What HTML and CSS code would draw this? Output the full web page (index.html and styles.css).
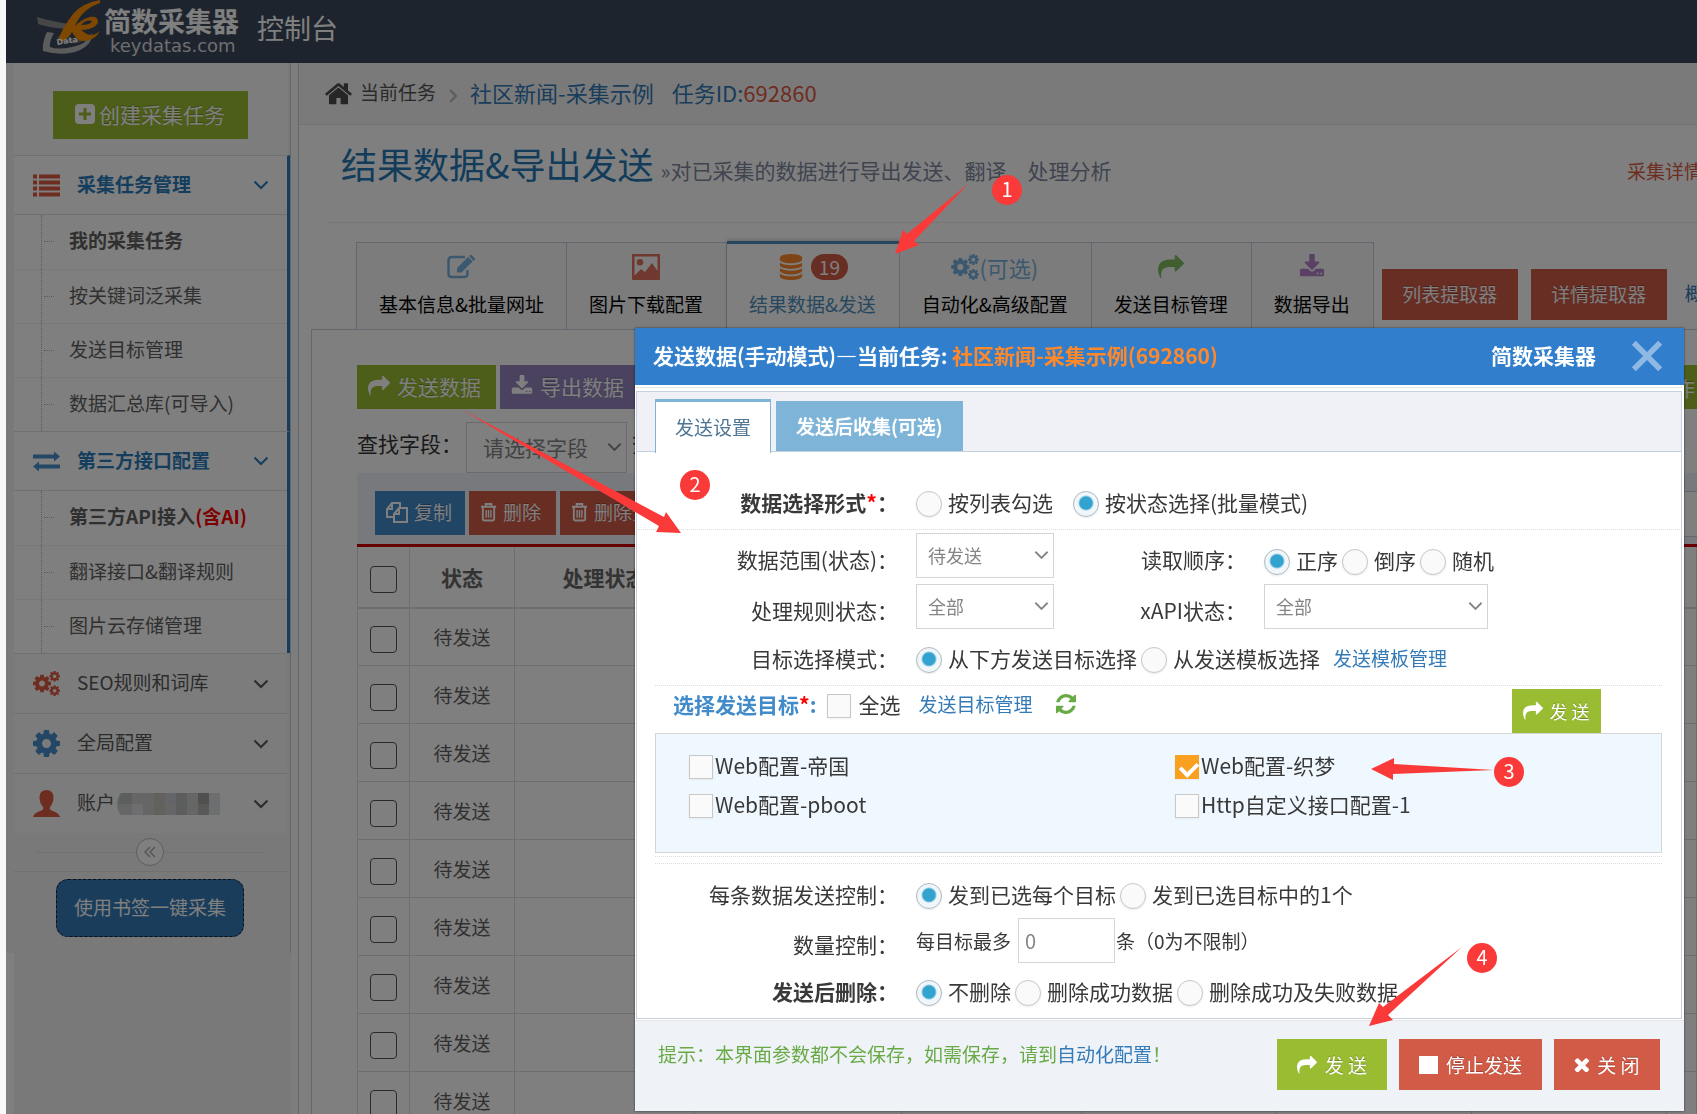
FILE: index.html
```html
<!DOCTYPE html>
<html lang="zh-CN">
<head>
<meta charset="utf-8">
<title>简数采集器 控制台</title>
<link rel="stylesheet" href="styles.css">
</head>
<body>
<svg class="sprite" aria-hidden="true">
  <symbol id="share" viewBox="0 0 1792 1792"><path d="M1792 640q0 26-19 45l-512 512q-19 19-45 19t-45-19-19-45v-256h-224q-98 0-175.500 6t-154 21.500-133 42.500-105.500 69.500-80 101-48.500 138.500-17.500 181q0 55 5 123 0 6 2.500 23.500t2.500 26.500q0 15-8.500 25t-23.500 10q-16 0-28-17-7-9-13-22t-13.500-30-10.500-24q-127-285-127-451 0-199 53-333 162-403 875-403h224v-256q0-26 19-45t45-19 45 19l512 512q19 19 19 45z"/></symbol>
  <symbol id="download" viewBox="0 0 1792 1792"><path d="M1344 1344q0-26-19-45t-45-19-45 19-19 45 19 45 45 19 45-19 19-45zm256 0q0-26-19-45t-45-19-45 19-19 45 19 45 45 19 45-19 19-45zm128-224v320q0 40-28 68t-68 28h-1472q-40 0-68-28t-28-68v-320q0-40 28-68t68-28h465l135 136q58 56 136 56t136-56l136-136h464q40 0 68 28t28 68zm-325-569q17 41-14 70l-448 448q-18 19-45 19t-45-19l-448-448q-31-29-14-70 17-39 59-39h256v-448q0-26 19-45t45-19h256q26 0 45 19t19 45v448h256q42 0 59 39z"/></symbol>
  <symbol id="cog" viewBox="128 128 1536 1536"><path d="M1152 896q0-106-75-181t-181-75-181 75-75 181 75 181 181 75 181-75 75-181zm512-109v222q0 12-8 23t-20 13l-185 28q-19 54-39 91 35 50 107 138 10 12 10 25t-9 23q-27 37-99 108t-94 71q-12 0-26-9l-138-108q-44 23-91 38-16 136-29 186-7 28-36 28h-222q-14 0-24.500-8.500t-11.500-21.500l-28-184q-49-16-90-37l-141 107q-10 9-25 9-14 0-25-11-126-114-165-168-7-10-7-23 0-12 8-23 15-21 51-66.500t54-70.500q-27-50-41-99l-183-27q-13-2-21-12.500t-8-23.500v-222q0-12 8-23t19-13l186-28q14-46 39-92-40-57-107-138-10-12-10-24 0-10 9-23 26-36 98.500-107.500t94.500-71.500q13 0 26 10l138 107q44-23 91-38 16-136 29-186 7-28 36-28h222q14 0 24.500 8.500t11.500 21.500l28 184q49 16 90 37l142-107q9-9 24-9 13 0 25 10 129 119 165 170 7 8 7 22 0 12-8 23-15 21-51 66.500t-54 70.500q26 50 41 98l183 28q13 2 21 12.500t8 23.500z"/></symbol>
  <symbol id="cogs" viewBox="0 0 30 28"><use href="#cog" x="0" y="4" width="20" height="20"/><use href="#cog" x="18" y="0" width="12" height="12"/><use href="#cog" x="18" y="16" width="12" height="12"/></symbol>
  <symbol id="home" viewBox="80 200 1632 1360"><path d="M1472 992v480q0 26-19 45t-45 19h-384v-384h-256v384h-384q-26 0-45-19t-19-45v-480q0-1 .5-3t.5-3l575-474 575 474q1 2 1 6zm223-69l-62 74q-8 9-21 11h-3q-13 0-21-7l-692-577-692 577q-12 8-24 7-13-2-21-11l-62-74q-8-10-7-23.500t11-21.500l719-599q32-26 76-26t76 26l244 204v-195q0-14 9-23t23-9h192q14 0 23 9t9 23v408l219 182q10 8 11 21.500t-7 23.500z"/></symbol>
  <symbol id="refresh" viewBox="128 128 1536 1536"><path d="M1639 1056q0 5-1 7-64 268-268 434.500t-478 166.500q-146 0-282.500-55t-243.500-157l-129 129q-19 19-45 19t-45-19-19-45v-448q0-26 19-45t45-19h448q26 0 45 19t19 45-19 45l-137 137q71 66 161 102t187 36q134 0 250-65t186-179q11-17 53-117 8-23 30-23h192q13 0 22.500 9.500t9.500 22.500zm25-800v448q0 26-19 45t-45 19h-448q-26 0-45-19t-19-45 19-45l138-138q-148-137-349-137-134 0-250 65t-186 179q-11 17-53 117-8 23-30 23h-199q-13 0-22.500-9.500t-9.500-22.500v-7q65-268 270-434.500t480-166.500q146 0 284 55.500t245 156.500l130-129q19-19 45-19t45 19 19 45z"/></symbol>
  <symbol id="database" viewBox="128 0 1536 1792"><path d="M896 768q237 0 443-43t325-127v170q0 69-103 128t-280 93.500-385 34.500-385-34.500-280-93.500-103-128v-170q119 84 325 127t443 43zm0 768q237 0 443-43t325-127v170q0 69-103 128t-280 93.500-385 34.500-385-34.500-280-93.500-103-128v-170q119 84 325 127t443 43zm0-384q237 0 443-43t325-127v170q0 69-103 128t-280 93.500-385 34.500-385-34.500-280-93.500-103-128v-170q119 84 325 127t443 43zm0-1152q208 0 385 34.500t280 93.500 103 128v128q0 69-103 128t-280 93.500-385 34.500-385-34.500-280-93.500-103-128v-128q0-69 103-128t280-93.500 385-34.500z"/></symbol>
  <symbol id="times" viewBox="238 366 1252 1252"><path transform="translate(0 96)" d="M1490 1322q0 40-28 68l-136 136q-28 28-68 28t-68-28l-294-294-294 294q-28 28-68 28t-68-28l-136-136q-28-28-28-68t28-68l294-294-294-294q-28-28-28-68t28-68l136-136q28-28 68-28t68 28l294 294 294-294q28-28 68-28t68 28l136 136q28 28 28 68t-28 68l-294 294 294 294q28 28 28 68z"/></symbol>
  <symbol id="chevron" viewBox="0 0 16 10"><path d="M1.500 1.500L8 8l6.500-6.500" fill="none" stroke="currentColor" stroke-width="2"/></symbol>
  <symbol id="trash" viewBox="0 0 18 20"><g fill="none" stroke="currentColor" stroke-width="2"><path d="M1 4.500h16M6 4V1.500h6V4M3 5v12.500Q3 19 4.500 19h9q1.500 0 1.500-1.500V5"/><path d="M6.500 8v8M9 8v8M11.500 8v8" stroke-width="1.500"/></g></symbol>
</svg>

<div class="page">
  <header class="navbar">
    <a class="brand" href="#">
      <svg class="brand-mark" viewBox="0 0 66 54" aria-hidden="true">
        <path d="M1 17Q14 21 33 24L31 29Q14 28 2 24z" fill="#8f8f8f"/>
        <path d="M11 32Q6 42 7 51Q28 57 44 50Q57 44 56 33Q50 45 36 47Q22 50 14 47Q13 42 18 33z" fill="#b8b8b8"/>
        <path d="M22 37Q36 46 50 38" fill="none" stroke="#777" stroke-width="3"/>
        <path fill-rule="evenodd" d="M64 0Q46 3 37 14Q27 27 23 38Q22 42 27 41Q32 39 36 32Q41 42 49 41Q59 40 64 31Q56 38 49 33L45 30Q60 29 62 22Q62 16 54 17Q46 19 39 26Q46 9 64 3zM45 25Q50 19 56 21Q55 25 45 25z" fill="#fe9000"/>
        <text x="21" y="45" class="mark-text" transform="rotate(-8 21 45)">Data</text>
      </svg>
      <span class="brand-name"><b>简数采集器</b><small>keydatas.com</small></span>
    </a>
    <span class="navbar-title">控制台</span>
  </header>

  <div class="main">
    <nav class="sidebar">
      <div class="side-top">
        <button class="btn green create"><svg class="plus" viewBox="0 0 20 20" aria-hidden="true"><path fill-rule="evenodd" d="M4 0h12q4 0 4 4v12q0 4-4 4H4q-4 0-4-4V4q0-4 4-4zm4.500 4v4.500H4v3h4.500V16h3v-4.500H16v-3h-4.500V4z"/></svg>创建采集任务</button>
      </div>
      <ul class="menu">
        <li class="open">
          <a class="group" href="#"><svg class="mi red" viewBox="0 0 27 22" aria-hidden="true"><path d="M0 0h4v4H0zM6 0h21v4H6zM0 6h4v4H0zM6 6h21v4H6zM0 12h4v4H0zM6 12h21v4H6zM0 18h4v4H0zM6 18h21v4H6z"/></svg><span>采集任务管理</span><svg class="chev"><use href="#chevron"/></svg></a>
          <ul class="sub">
            <li><a class="strong" href="#">我的采集任务</a></li>
            <li><a href="#">按关键词泛采集</a></li>
            <li><a href="#">发送目标管理</a></li>
            <li><a href="#">数据汇总库(可导入)</a></li>
          </ul>
        </li>
        <li class="open">
          <a class="group" href="#"><svg class="mi blue" viewBox="0 0 27 20" aria-hidden="true"><path d="M0 3h21V0l6 5-6 5V7H0zM27 13H6v-3l-6 5 6 5v-3h21z"/></svg><span>第三方接口配置</span><svg class="chev"><use href="#chevron"/></svg></a>
          <ul class="sub">
            <li><a class="strong" href="#">第三方API接入<em>(含AI)</em></a></li>
            <li><a href="#">翻译接口&amp;翻译规则</a></li>
            <li><a href="#">图片云存储管理</a></li>
          </ul>
        </li>
        <li><a class="group" href="#"><svg class="mi red"><use href="#cogs"/></svg><span>SEO规则和词库</span><svg class="chev"><use href="#chevron"/></svg></a></li>
        <li><a class="group" href="#"><svg class="mi blue"><use href="#cog"/></svg><span>全局配置</span><svg class="chev"><use href="#chevron"/></svg></a></li>
        <li><a class="group" href="#"><svg class="mi red" viewBox="0 0 27 27" aria-hidden="true"><path d="M13.500 0Q20 0 20.500 7Q20.500 13 17 17Q16 20 20 21Q26 23 27 27H0Q1 23 7 21Q11 20 10 17Q6.500 13 6.500 7Q7 0 13.500 0z"/></svg><span>账户</span>
          <svg class="mosaic" viewBox="0 0 103 22" aria-hidden="true"><path fill="#cdcdcd" d="M4 0h95q4 0 4 4v14q0 4-4 4H4q-4-4-4-11T4 0z"/><path fill="#b9bcbb" d="M4 0h11v11H1zM59 0h11v22H59z"/><path fill="#c5c2bd" d="M37 0h11v22H37z"/><path fill="#dadde0" d="M15 11h11v11H15zM92 0h11v22H92z"/><path fill="#c8cbd2" d="M48 0h11v11H48z"/><path fill="#a2a19c" d="M81 0h11v11H81z"/><path fill="#b3b2ae" d="M81 11h11v11H81z"/></svg>
          <svg class="chev"><use href="#chevron"/></svg></a></li>
      </ul>
      <div class="collapse"><button aria-label="收起菜单"><svg viewBox="0 0 12 12" aria-hidden="true"><path d="M6 1L1 6l5 5M11 1L6 6l5 5" fill="none" stroke="currentColor" stroke-width="1.500"/></svg></button></div>
      <div class="side-bottom"><button class="bookmark">使用书签一键采集</button></div>
    </nav>

    <main class="content">
      <div class="crumbs">
        <svg class="home"><use href="#home"/></svg>
        <a class="crumb" href="#">当前任务</a>
        <svg class="sep" viewBox="0 0 8 14" aria-hidden="true"><path d="M1 1l6 6-6 6" fill="none" stroke="currentColor" stroke-width="2"/></svg>
        <a class="task" href="#">社区新闻-采集示例</a>
        <span class="task">任务ID:<em>692860</em></span>
      </div>
      <div class="heading">
        <h1>结果数据&amp;导出发送</h1>
        <small>»对已采集的数据进行导出发送、翻译、处理分析</small>
        <a class="detail" href="#">采集详情</a>
      </div>
      <div class="tabs">
        <a class="tab" href="#"><span class="tab-icon c-blue"><svg viewBox="0 0 28 24" aria-hidden="true"><path d="M18 2H5Q1.500 2 1.500 5.500v13Q1.500 22 5 22h12q3.500 0 3.500-3.500V15" fill="none" stroke="currentColor" stroke-width="2.500"/><path d="M10 13L21 2l4.500 4.500-11 11H10zM22 1l1-1q1-.5 2 .5L27.500 3q1 1 0 2l-1 1z"/></svg></span><span>基本信息&amp;批量网址</span></a>
        <a class="tab" href="#"><span class="tab-icon c-red"><svg viewBox="0 0 28 26" aria-hidden="true"><path fill-rule="evenodd" d="M1 0h26q1 0 1 1v24q0 1-1 1H1q-1 0-1-1V1q0-1 1-1zm1.500 2.500v19L9 15l4 3 7-9 5.500 8V2.500zM8 5a3 3 0 1 1 0 6.500A3 3 0 1 1 8 5z"/></svg></span><span>图片下载配置</span></a>
        <a class="tab active" href="#"><span class="tab-icon c-orange"><svg><use href="#database"/></svg><b class="count">19</b></span><span>结果数据&amp;发送</span></a>
        <a class="tab" href="#"><span class="tab-icon c-blue"><svg><use href="#cogs"/></svg>(可选)</span><span>自动化&amp;高级配置</span></a>
        <a class="tab" href="#"><span class="tab-icon c-green"><svg><use href="#share"/></svg></span><span>发送目标管理</span></a>
        <a class="tab" href="#"><span class="tab-icon c-purple"><svg><use href="#download"/></svg></span><span>数据导出</span></a>
        <div class="tab-actions">
          <button class="btn red">列表提取器</button>
          <button class="btn red">详情提取器</button>
          <a class="overview" href="#">概</a>
        </div>
      </div>
      <section class="widget">
        <div class="actions">
          <button class="btn green"><svg class="bi"><use href="#share"/></svg>发送数据</button>
          <button class="btn purple"><svg class="bi"><use href="#download"/></svg>导出数据</button>
          <button class="btn green more">作</button>
        </div>
        <div class="search">
          <label for="field">查找字段：</label>
          <span class="select big"><select id="field"><option>请选择字段</option></select><svg><use href="#chevron"/></svg></span>
          <span>查</span>
        </div>
        <div class="toolbar">
          <button class="btn azure"><svg class="bi" viewBox="0 0 22 22" aria-hidden="true"><path d="M7 16H1V8l5-6h8v5M1 8h5V2M8 13l5-6h8v14H8zM8 13h5V7" fill="none" stroke="currentColor" stroke-width="2"/></svg>复制</button>
          <button class="btn red"><svg class="ti"><use href="#trash"/></svg>删除</button>
          <button class="btn red"><svg class="ti"><use href="#trash"/></svg>删除全部</button>
          <input class="tool-input" aria-label="筛选">
        </div>
        <table class="grid">
          <colgroup><col class="c1"><col class="c2"><col class="c3"><col class="c4"><col class="c3"><col class="c5"><col class="c5"><col class="c5"><col></colgroup>
          <thead><tr><th><input type="checkbox" aria-label="全部行"></th><th>状态</th><th>处理状态</th><th></th><th></th><th></th><th></th><th></th><th></th></tr></thead>
          <tbody>
            <tr><td><input type="checkbox" aria-label="第1行"></td><td>待发送</td><td></td><td></td><td></td><td></td><td></td><td></td><td></td></tr>
            <tr><td><input type="checkbox" aria-label="第2行"></td><td>待发送</td><td></td><td></td><td></td><td></td><td></td><td></td><td></td></tr>
            <tr><td><input type="checkbox" aria-label="第3行"></td><td>待发送</td><td></td><td></td><td></td><td></td><td></td><td></td><td></td></tr>
            <tr><td><input type="checkbox" aria-label="第4行"></td><td>待发送</td><td></td><td></td><td></td><td></td><td></td><td></td><td></td></tr>
            <tr><td><input type="checkbox" aria-label="第5行"></td><td>待发送</td><td></td><td></td><td></td><td></td><td></td><td></td><td></td></tr>
            <tr><td><input type="checkbox" aria-label="第6行"></td><td>待发送</td><td></td><td></td><td></td><td></td><td></td><td></td><td></td></tr>
            <tr><td><input type="checkbox" aria-label="第7行"></td><td>待发送</td><td></td><td></td><td></td><td></td><td></td><td></td><td></td></tr>
            <tr><td><input type="checkbox" aria-label="第8行"></td><td>待发送</td><td></td><td></td><td></td><td></td><td></td><td></td><td></td></tr>
            <tr><td><input type="checkbox" aria-label="第9行"></td><td>待发送</td><td></td><td></td><td></td><td></td><td></td><td></td><td></td></tr>
          </tbody>
        </table>
      </section>
    </main>
  </div>
</div>

<div class="overlay"></div>

<div class="modal" role="dialog" aria-labelledby="dlg-title">
  <div class="modal-head">
    <h2 id="dlg-title">发送数据(手动模式)—当前任务: <em>社区新闻-采集示例(692860)</em></h2>
    <strong>简数采集器</strong>
    <button class="close" aria-label="关闭窗口"><svg viewBox="0 0 34 34" aria-hidden="true"><path d="M3 3l28 28M31 3L3 31" stroke="currentColor" stroke-width="6"/></svg></button>
  </div>
  <div class="panel">
    <div class="panel-tabs">
      <button class="ptab on">发送设置</button>
      <button class="ptab">发送后收集(可选)</button>
    </div>
    <div class="row first">
      <span class="lbl bold">数据选择形式<i>*</i>：</span>
      <div class="opts wide">
        <label><input type="radio" name="pick">按列表勾选</label>
        <label><input type="radio" name="pick" checked>按状态选择(批量模式)</label>
      </div>
    </div>
    <div class="body">
      <div class="row four">
        <label class="lbl low" for="range">数据范围(状态)：</label>
        <span class="select"><select id="range"><option>待发送</option></select><svg><use href="#chevron"/></svg></span>
        <span class="lbl low">读取顺序：</span>
        <div class="opts low">
          <label><input type="radio" name="order" checked>正序</label>
          <label><input type="radio" name="order">倒序</label>
          <label><input type="radio" name="order">随机</label>
        </div>
      </div>
      <div class="row four">
        <label class="lbl low" for="rule">处理规则状态：</label>
        <span class="select"><select id="rule"><option>全部</option></select><svg><use href="#chevron"/></svg></span>
        <label class="lbl low" for="xapi">xAPI状态：</label>
        <span class="select long"><select id="xapi"><option>全部</option></select><svg><use href="#chevron"/></svg></span>
      </div>
      <div class="row ruled">
        <span class="lbl">目标选择模式：</span>
        <div class="opts">
          <label><input type="radio" name="mode" checked>从下方发送目标选择</label>
          <label><input type="radio" name="mode">从发送模板选择</label>
          <a class="link" href="#">发送模板管理</a>
        </div>
      </div>
      <div class="target-head">
        <div class="target-tools">
          <strong>选择发送目标<i>*</i>:</strong>
          <label class="all"><input type="checkbox">全选</label>
          <a class="link" href="#">发送目标管理</a>
          <button class="reload" aria-label="刷新"><svg><use href="#refresh"/></svg></button>
        </div>
        <button class="btn green send"><svg class="si"><use href="#share"/></svg>发 送</button>
      </div>
      <div class="targets">
        <label><input type="checkbox">Web配置-帝国</label>
        <label><input type="checkbox" checked>Web配置-织梦</label>
        <label><input type="checkbox">Web配置-pboot</label>
        <label><input type="checkbox">Http自定义接口配置-1</label>
      </div>
      <div class="rules"></div>
      <div class="row ctl">
        <span class="lbl">每条数据发送控制：</span>
        <div class="opts">
          <label><input type="radio" name="each" checked>发到已选每个目标</label>
          <label><input type="radio" name="each">发到已选目标中的1个</label>
        </div>
      </div>
      <div class="row qty">
        <label class="lbl low" for="max">数量控制：</label>
        <div class="amount">每目标最多<input id="max" type="text" value="0">条（0为不限制）</div>
      </div>
      <div class="row del">
        <span class="lbl bold">发送后删除：</span>
        <div class="opts">
          <label><input type="radio" name="del" checked>不删除</label>
          <label><input type="radio" name="del">删除成功数据</label>
          <label><input type="radio" name="del">删除成功及失败数据</label>
        </div>
      </div>
    </div>
  </div>
  <div class="modal-foot">
    <p>提示：本界面参数都不会保存，如需保存，请到<a class="link" href="#">自动化配置</a>！</p>
    <button class="btn green b-send"><svg class="si"><use href="#share"/></svg>发 送</button>
    <button class="btn red b-stop"><i class="square"></i>停止发送</button>
    <button class="btn red b-close"><svg class="xi"><use href="#times"/></svg>关 闭</button>
  </div>
</div>

<svg class="marks" aria-hidden="true">
  <path d="M968 184L907 234 903 230 895 254 919 245 914 241z"/>
  <path d="M461 409L664 517 666 512 681 533 656 532 659 526z"/>
  <path d="M1494 770L1394 764V758L1371 769 1393 780V774z"/>
  <path d="M1462 947L1383 1007 1379 1003 1369 1026 1393 1020 1388 1015z"/>
</svg>
<span class="pin pin1">1</span>
<span class="pin pin2">2</span>
<span class="pin pin3">3</span>
<span class="pin pin4">4</span>
</body>
</html>
```
FILE: styles.css
```css
* { box-sizing: border-box; }
html, body { height: 100%; }
body {
  margin: 0;
  position: relative;
  overflow: hidden;
  background: #f8f8f8;
  color: #393939;
  font: 19px/26px "Noto Sans CJK SC", "Noto Sans", sans-serif;
}
button, input, select { font: inherit; color: inherit; margin: 0; }
button { cursor: pointer; border: 0; padding: 0; background: none; white-space: nowrap; }
a { color: inherit; text-decoration: none; }
ul { list-style: none; margin: 0; padding: 0; }
em, i { font-style: normal; }
svg { fill: currentColor; flex: none; }
.sprite { position: absolute; width: 0; height: 0; }

.page { margin-left: 6px; height: 100%; display: flex; flex-direction: column; overflow: hidden; background: #fff; }

/* header */
.navbar { display: flex; align-items: flex-start; height: 63px; flex: none; padding-left: 30px; background: #3c485c; color: #fff; }
.brand { display: flex; }
.brand-mark { width: 66px; height: 54px; }
.mark-text { font: bold 8px "DejaVu Sans", sans-serif; fill: #fff; }
.brand-name { display: flex; flex-direction: column; padding: 2px 0 0 2px; }
.brand-name b { font-size: 27px; line-height: 38px; }
.brand-name small { font: 18px/12px "DejaVu Sans", sans-serif; padding-left: 6px; color: #ddd; }
.navbar-title { font-size: 27px; line-height: 56px; padding-left: 18px; }

/* sidebar */
.main { display: flex; flex: 1; min-height: 0; background: linear-gradient(90deg, #fff 8px, #f2f2f2 8px); }
.sidebar { width: 285px; height: 890px; flex: none; padding: 0 2px 0 8px; background: #f2f2f2; border-right: 1px solid #ccc; }
.side-top { height: 92px; display: flex; align-items: center; justify-content: center; padding-right: 2px; background: #fafafa; }
.btn { display: inline-flex; align-items: center; justify-content: center; color: #fff; text-shadow: 0 -1px 0 rgba(0,0,0,.25); padding-bottom: 2px; }
.green { background: #9abc32; }
.red { background: #d15b47; }
.purple { background: #9585bf; }
.azure { background: #428bca; }
.create { width: 195px; height: 48px; gap: 4px; font-size: 21px; margin-top: 12px; }
.plus { width: 20px; height: 20px; }
.menu { margin-right: -2px; }
.menu > li { border-top: 1px solid #e0e0e0; margin-right: 3px; background: #f9f9f9; }
.menu > li.open { margin-right: 0; border-right: 3px solid #2b7dbc; background: #fff; }
.group { display: flex; align-items: center; height: 59px; padding: 0 18px 0 19px; color: #585858; }
.group span { margin-top: -3px; }
.open .group { height: 58px; color: #2b7dbc; font-weight: bold; }
.mi { width: 27px; height: 27px; margin-right: 17px; }
svg.red { color: #dd5a43; background: none; }
svg.blue { color: #478fca; }
.chev { width: 16px; height: 10px; margin-left: auto; }
.mosaic { width: 103px; height: 22px; margin-left: 2px; }
.sub { position: relative; border-top: 1px solid #e0e0e0; }
.sub::before { content: ""; position: absolute; left: 27px; top: 0; bottom: 0; border-left: 1px dotted #9dbdd6; }
.sub li { position: relative; height: 54px; }
.sub li + li { border-top: 1px dotted #e4e4e4; }
.sub li::before { content: ""; position: absolute; left: 30px; top: 26px; width: 10px; border-top: 1px dotted #9dbdd6; }
.sub a { display: block; padding-left: 55px; line-height: 50px; color: #616161; }
.sub .strong { font-weight: bold; }
.sub em { color: red; }
.collapse { height: 39px; border-bottom: 1px solid #e0e0e0; display: flex; align-items: center; padding: 0 24px 0 22px; }
.collapse::before, .collapse::after { content: ""; flex: 1; border-top: 1px solid #e0e0e0; }
.collapse button { width: 28px; height: 28px; border: 1px solid #bbb; border-radius: 50%; background: #fff; color: #aaa; display: flex; align-items: center; justify-content: center; }
.collapse svg { width: 12px; height: 12px; }
.side-bottom { padding: 7px 2px 0 0; text-align: center; }
.bookmark { width: 188px; height: 58px; padding-bottom: 3px; border: 1px dashed #123; border-radius: 12px; background: #337ab7; color: #fff; }

/* content */
.content { flex: 1; min-width: 0; margin-left: 7px; border-left: 1px solid #ccc; background: #fff; overflow: hidden; box-shadow: -7px 0 0 #fafafa; }
.crumbs { display: flex; align-items: center; height: 62px; padding-left: 26px; background: #f5f5f5; border-bottom: 1px solid #e5e5e5; white-space: nowrap; }
.home { width: 27px; height: 23px; margin-right: 8px; color: #4c4c4c; }
.crumb { color: #555; margin-top: -3px; }
.sep { width: 8px; height: 14px; margin: 4px 13px 0; color: #b2b6bf; }
.task { color: #337ab7; font-size: 22px; margin: -4px 18px 0 0; }
.task em { color: #dd5a43; }
.heading { display: flex; align-items: baseline; height: 98px; margin-left: 30px; padding: 8px 0 0 12px; border-bottom: 1px dotted #ddd; white-space: nowrap; }
.heading h1 { margin: 0; font-weight: normal; font-size: 36px; line-height: 60px; color: #2679b5; }
.heading small { font-size: 21px; margin-left: 7px; color: #8089a0; }
.detail { margin: 0 -6px 0 auto; color: #dd5a43; }
.tabs { display: flex; height: 106px; padding: 19px 0 0 57px; white-space: nowrap; }
.tab { display: flex; flex-direction: column; align-items: center; padding: 8px 23px 0 22px; border: 1px solid #c5d0dc; border-width: 1px 1px 0 0; color: #000; background: #f9f9f9; }
.tab:first-child { border-left-width: 1px; padding: 8px 22px 0; }
.tab-icon { display: flex; align-items: center; gap: 6px; height: 32px; margin-bottom: 8px; font-size: 22px; }
.tab-icon svg { width: 28px; height: 26px; }
.tab.active { color: #4c8fbd; background: #fff; border-top: 3px solid #4c8fbd; padding-top: 7px; margin-top: -1px; box-shadow: 0 -2px 3px rgba(0,0,0,.15); }
.count { padding: 0 8px; border-radius: 13px; background: #d15b47; color: #fff; font-weight: normal; font-size: 19px; line-height: 26px; }
.tab .c-blue { color: #78b0de; gap: 0; }
.c-red { color: #e0705c; }
.c-orange { color: #ff892a; }
.c-green { color: #82bd62; }
.c-purple { color: #b480c8; }
.tab-actions { display: flex; align-items: flex-start; gap: 13px; padding: 27px 0 0 8px; }
.tab-actions .btn { width: 136px; height: 51px; }
.overview { color: #337ab7; line-height: 48px; margin-left: 5px; }
.widget { margin-left: 12px; padding: 35px 0 0 45px; border: 1px solid #c5d0dc; border-width: 1px 0 0 1px; }
.actions { display: flex; gap: 4px; font-size: 21px; }
.actions .btn { height: 44px; padding: 0 15px 3px 11px; gap: 7px; }
.actions .more { margin-left: auto; padding: 0 2px; min-width: 60px; justify-content: flex-end; }
.bi { width: 22px; height: 22px; }
.ti { width: 17px; height: 20px; }
.search { display: flex; height: 64px; padding-top: 13px; font-size: 21px; color: #333; }
.search > * { flex: none; }
.search label { width: 109px; line-height: 42px; }
.search > span:last-child { line-height: 42px; margin-left: 5px; }
.select { position: relative; display: block; color: #858585; font-size: 18px; }
.select select { appearance: none; width: 100%; height: 45px; padding: 0 11px 1px; border: 1px solid #d5d5d5; border-radius: 0; background: #fff; }
.select svg { position: absolute; right: 5px; top: 17px; width: 15px; height: 10px; pointer-events: none; }
.select.big { width: 161px; font-size: 21px; }
.select.big select { height: 51px; padding: 0 16px 2px; }
.select.big svg { top: 20px; }
.toolbar { display: flex; gap: 4px; height: 71px; padding: 18px 0 0 18px; background: #eff3f8; }
.toolbar .btn { height: 44px; padding: 0 15px 2px 11px; gap: 6px; }
.toolbar .azure { padding-right: 13px; }
.tool-input { width: 200px; height: 46px; margin-left: auto; border: 1px solid #ccc; border-right: 0; background: #fff; }
.grid { width: 100%; table-layout: fixed; border-collapse: collapse; border-top: 3px solid #c00; border-left: 1px solid #ddd; color: #616161; text-align: center; }
.c1 { width: 52px; } .c2 { width: 105px; } .c3 { width: 180px; } .c4 { width: 207px; } .c5 { width: 195px; }
.grid td, .grid th { height: 58px; padding: 0; border: 1px solid #ddd; border-width: 0 1px 1px 0; }
.grid th { height: 62px; font-size: 21px; color: #666; border-bottom: 2px solid #ddd; }
.grid input { appearance: none; display: block; width: 27px; height: 27px; margin: 5px auto 0; border: 1px solid #555; border-radius: 4px; background: #fff; }

.overlay { position: fixed; inset: 0 0 0 6px; background: rgba(0,0,0,.5); }

/* dialog */
.modal { position: absolute; left: 635px; right: 13px; top: 328px; background: #fff; font-size: 21px; box-shadow: 0 0 2px rgba(0,0,0,.6); }
.modal-head { display: flex; align-items: center; height: 57px; padding: 0 21px 0 18px; background: #307ecc; color: #fff; white-space: nowrap; }
.modal-head h2 { margin: -3px 0 0; font-size: 21px; font-weight: 500; text-shadow: 0 0 1px currentColor; }
.modal-head em { color: #ff892a; font-weight: bold; text-shadow: none; }
.modal-head strong { margin: -3px 0 0 auto; }
.close { width: 32px; height: 34px; margin: -2px 0 0 35px; color: #8fb8e5; }
.close svg { width: 32px; height: 34px; display: block; }
.panel { margin: 2px 2px 1px 1px; border-top: 1px solid #e5e5e5; padding-top: 3px; }
.panel-tabs { display: flex; align-items: flex-end; gap: 5px; height: 61px; padding-left: 18px; background: #eff1f7; border: 1px solid #c5d0dc; font-size: 19px; }
.ptab { height: 50px; padding: 0 20px; background: #7db4d8; color: #fff; font-weight: 500; text-shadow: 0 0 1px currentColor; }
.ptab.on { height: 54px; margin-bottom: -2px; padding: 0 19px 2px; border: 1px solid #7db4d8; border-width: 3px 1px 0; background: #fff; color: #4f7692; font-weight: normal; text-shadow: none; }
.panel .row { display: grid; grid-template-columns: 243px 1fr; column-gap: 18px; align-items: center; white-space: nowrap; }
.panel .first { height: 78px; padding: 25px 19px 0; border: 1px dotted #ddd; border-width: 0 0 1px; }
.first, .body { box-shadow: inset 1px 0 #c5d0dc, inset -1px 0 #c5d0dc; }
.body { padding: 0 20px 0 19px; border-bottom: 1px solid #c5d0dc; }
.lbl { text-align: right; padding-bottom: 3px; }
.lbl.low { padding: 6px 0 0; }
.bold { font-weight: bold; }
.lbl i, strong i { color: red; }
.opts { display: flex; align-items: center; gap: 4px; padding-bottom: 3px; }
.opts.wide { gap: 20px; }
.opts.low { padding: 8px 0 0; }
.opts label { display: flex; align-items: center; gap: 6px; }
.panel input[type=radio] { appearance: none; width: 26px; height: 26px; margin-top: 4px; border: 1px solid #c8c8c8; border-radius: 50%; background: #fafafa; box-shadow: 0 1px 2px rgba(0,0,0,.08); }
.panel input[type=radio]:checked { border-color: #adb8c0; background: radial-gradient(circle at 50% 46%, #32a3ce 6px, #f1f6fb 8px); }
.panel input[type=checkbox] { appearance: none; flex: none; width: 24px; height: 24px; border: 1px solid #c8c8c8; background: #fafafa; box-shadow: 0 1px 2px rgba(0,0,0,.05); }
.panel input[type=checkbox]:checked { border-color: #f9a021; background: #f9a021; position: relative; }
.panel input[type=checkbox]:checked::after { content: ""; position: absolute; left: 7px; top: 3px; width: 8px; height: 13px; border: solid #fff; border-width: 0 4px 4px 0; transform: rotate(45deg); }
.panel .four { grid-template-columns: 243px 138px 174px 1fr; height: 51px; }
.four + .four { margin-bottom: 1px; }
.select.long { width: 224px; }
.panel .ruled { height: 53px; border-bottom: 1px dotted #ddd; }
.link { color: #337ab7; font-size: 19px; }
.opts .link { margin-left: 9px; }
.target-head { display: flex; justify-content: space-between; height: 47px; padding-right: 61px; white-space: nowrap; }
.target-tools { display: flex; align-items: center; height: 36px; padding-left: 18px; }
.target-tools strong { color: #428bca; }
.all { display: flex; align-items: center; gap: 7px; margin: 0 18px 0 11px; }
.all input { margin-top: 4px; }
.reload { margin-left: 23px; color: #69aa46; line-height: 0; }
.reload svg { width: 20px; height: 20px; }
.send { width: 89px; height: 44px; margin-top: 3px; padding-bottom: 0; gap: 6px; font-size: 18px; }
.si { width: 20px; height: 20px; }
.targets { display: grid; grid-template-columns: 1fr 1fr; grid-auto-rows: 39px; min-height: 120px; padding: 11px 0 0 33px; border: 1px solid #d5d5d5; background: #f0f8ff; }
.targets label { display: flex; align-items: center; gap: 2px; }
.targets input[type=checkbox] { margin-top: 5px; }
.rules { height: 8px; margin: 3px 0 0; border: 1px dotted #ddd; border-width: 1px 0; }
.panel .ctl { height: 53px; padding-top: 9px; }
.panel .qty { height: 47px; }
.panel .del { height: 54px; padding-top: 3px; }
.amount { display: flex; align-items: center; font-size: 19px; }
.amount input { width: 97px; height: 45px; margin: 0 1px 0 7px; padding: 0 6px; border: 1px solid #d5d5d5; color: #858585; font-size: 20px; }
.modal-foot { display: flex; align-items: flex-start; gap: 12px; height: 91px; padding: 18px 24px 0 23px; background: #eff3f8; border-top: 1px solid #e5e5e5; font-size: 19px; white-space: nowrap; }
.modal-foot p { margin: 2px auto 0 0; color: #69aa46; }
.modal-foot .btn { height: 51px; gap: 8px; padding-bottom: 0; }
.b-send { width: 110px; }
.b-stop { width: 143px; }
.b-close { width: 106px; }
.square { width: 19px; height: 18px; background: #fff; }
.xi { width: 15px; height: 15px; }

/* annotations */
.marks { position: absolute; left: 0; top: 0; width: 100%; height: 100%; fill: #fa3a38; pointer-events: none; }
.pin { position: absolute; width: 30px; height: 30px; border-radius: 50%; background: #fa3a38; color: #fff; font: 20px/28px "Noto Sans CJK SC", sans-serif; text-align: center; }
.pin1 { left: 992px; top: 175px; }
.pin2 { left: 680px; top: 470px; }
.pin3 { left: 1494px; top: 757px; }
.pin4 { left: 1467px; top: 943px; }
```
